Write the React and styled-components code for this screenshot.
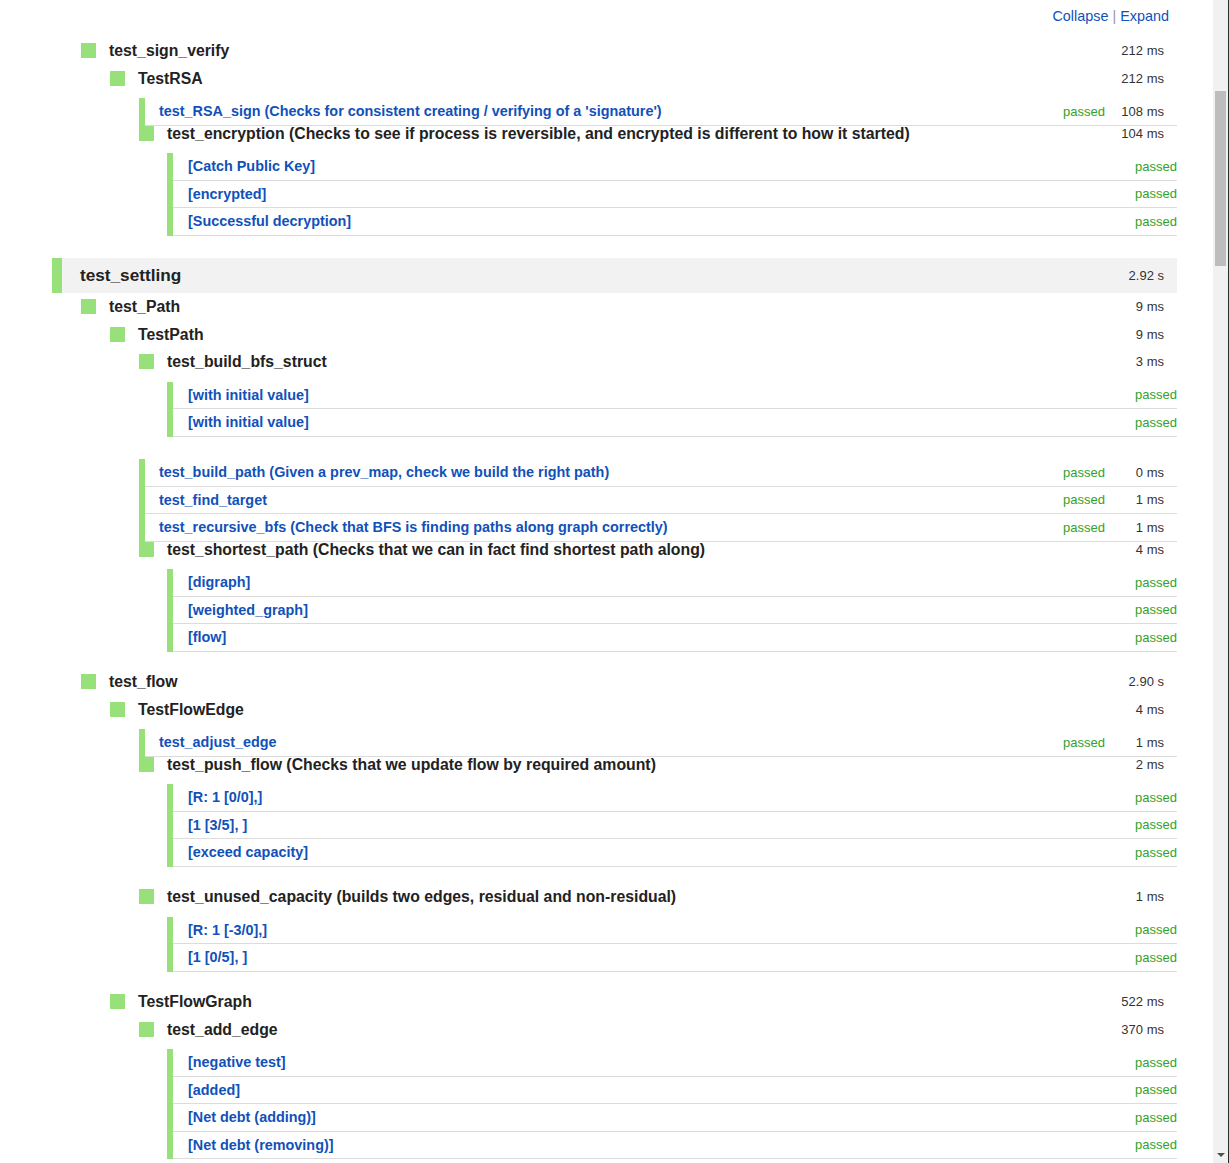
import styled, { createGlobalStyle } from 'styled-components'

const GREEN = '#98e07a'
const LINK = '#1151b9'

const Global = createGlobalStyle`
    html, body {
        margin: 0;
        padding: 0;
        overflow: hidden;
        background: #fff;
    }
    body {
        font-family: "Liberation Sans", Arial, sans-serif;
        color: #222;
    }
`

//#     --- Page frame
const Page = styled.div`
    display: flex;
    height: 1163px;
    overflow: hidden;
`
const Main = styled.main`
    flex: 1;
    min-width: 0;
    padding: 8px 36px 0 52px;
`
const Scrollbar = styled.div`
    width: 15px;
    background-color: #f1f1f1;
    border-right: 1px solid #2b2b2b;
    display: flex;
    flex-direction: column;
    align-items: flex-start;
`
const Thumb = styled.div`
    margin: 91px 0 0 2px;
    width: 11px;
    height: 175px;
    background-color: #bdbdbd;
`
const DownArrow = styled.div`
    margin: auto 0 6px 4px;
    width: 0;
    height: 0;
    border-left: 4px solid transparent;
    border-right: 4px solid transparent;
    border-top: 4px solid #505050;
`

//#     --- Toolbar
const Toolbar = styled.div`
    display: flex;
    justify-content: flex-end;
    align-items: center;
    height: 16px;
    padding-right: 8px;
    margin-bottom: 19px;
    font-size: 14.4px;
    line-height: 16px;
`
const ToolLink = styled.a`
    color: ${ LINK };
    text-decoration: none;
    cursor: pointer;
`
const Sep = styled.span`
    color: #999;
    margin: 0 4px;
`

//#     --- Tree
const Nest = styled.div`
    margin-left: ${ ({ $indent }) => $indent }px;
`
const ModuleHeader = styled.div`
    display: flex;
    align-items: center;
    height: 35px;
    background-color: #f2f2f2;
    border-left: 10px solid ${ GREEN };
    padding: 0 13px 0 18px;
    margin-bottom: 6px;
`
const ModuleTitle = styled.span`
    flex: 1;
    font-size: 17.2px;
    font-weight: bold;
    color: #222;
`
const Heading = styled.div`
    display: flex;
    align-items: center;
    height: 15px;
    margin-bottom: 12.5px;
    padding-right: 13px;
`
const Square = styled.span`
    flex-shrink: 0;
    width: 15px;
    height: 15px;
    margin-right: 13px;
    background-color: ${ GREEN };
`
const Title = styled.span`
    flex: 1;
    font-size: 15.8px;
    font-weight: bold;
    color: #222;
    white-space: nowrap;
    line-height: 15px;
`
const Time = styled.span`
    font-size: 13px;
    color: #333;
    white-space: nowrap;
`
const RowList = styled.div`
    border-left: 6px solid ${ GREEN };
    margin-left: ${ ({ $indent }) => $indent || 0 }px;
    margin-bottom: ${ ({ $gap }) => $gap || 0 }px;
`
const Row = styled.div`
    display: flex;
    align-items: center;
    height: 26.5px;
    border-bottom: 1px solid #dcdcdc;
    padding-left: ${ ({ $param }) => $param ? 15 : 14 }px;
`
const Name = styled.a`
    flex: 1;
    font-size: 14.4px;
    font-weight: bold;
    color: ${ LINK };
    text-decoration: none;
    white-space: nowrap;
`
const Status = styled.span`
    font-size: 13px;
    color: #33a22a;
`
const RowTime = styled(Time)`
    width: 59px;
    padding-right: 13px;
    text-align: right;
`

const before = [
    { type: 'group', name: 'test_sign_verify', time: '212 ms', children: [
        { type: 'group', name: 'TestRSA', time: '212 ms', children: [
            { type: 'tests', items: [
                { name: "test_RSA_sign (Checks for consistent creating / verifying of a 'signature')", time: '108 ms' },
            ] },
            { type: 'sub', name: 'test_encryption (Checks to see if process is reversible, and encrypted is different to how it started)', time: '104 ms',
                params: ['[Catch Public Key]', '[encrypted]', '[Successful decryption]'] },
        ] },
    ] },
]

const settling = [
    { type: 'group', name: 'test_Path', time: '9 ms', children: [
        { type: 'group', name: 'TestPath', time: '9 ms', children: [
            { type: 'sub', name: 'test_build_bfs_struct', time: '3 ms',
                params: ['[with initial value]', '[with initial value]'] },
            { type: 'tests', items: [
                { name: 'test_build_path (Given a prev_map, check we build the right path)', time: '0 ms' },
                { name: 'test_find_target', time: '1 ms' },
                { name: 'test_recursive_bfs (Check that BFS is finding paths along graph correctly)', time: '1 ms' },
            ] },
            { type: 'sub', name: 'test_shortest_path (Checks that we can in fact find shortest path along)', time: '4 ms',
                params: ['[digraph]', '[weighted_graph]', '[flow]'] },
        ] },
    ] },
    { type: 'group', name: 'test_flow', time: '2.90 s', children: [
        { type: 'group', name: 'TestFlowEdge', time: '4 ms', children: [
            { type: 'tests', items: [
                { name: 'test_adjust_edge', time: '1 ms' },
            ] },
            { type: 'sub', name: 'test_push_flow (Checks that we update flow by required amount)', time: '2 ms',
                params: ['[R: 1 [0/0],]', '[1 [3/5], ]', '[exceed capacity]'] },
            { type: 'sub', name: 'test_unused_capacity (builds two edges, residual and non-residual)', time: '1 ms',
                params: ['[R: 1 [-3/0],]', '[1 [0/5], ]'] },
        ] },
        { type: 'group', name: 'TestFlowGraph', time: '522 ms', children: [
            { type: 'sub', name: 'test_add_edge', time: '370 ms',
                params: ['[negative test]', '[added]', '[Net debt (adding)]', '[Net debt (removing)]'] },
        ] },
    ] },
]

const Node = ({ node }) => {
    if (node.type === 'tests') {
        return (
            <RowList>
                { node.items.map((t, i) => (
                    <Row key={ i }>
                        <Name>{ t.name }</Name>
                        <Status>passed</Status>
                        <RowTime>{ t.time }</RowTime>
                    </Row>
                )) }
            </RowList>
        )
    }
    if (node.type === 'sub') {
        return (
            <div>
                <Heading>
                    <Square />
                    <Title>{ node.name }</Title>
                    <Time>{ node.time }</Time>
                </Heading>
                <RowList $indent={ 28 } $gap={ 22.5 }>
                    { node.params.map((p, i) => (
                        <Row $param key={ i }>
                            <Name>{ p }</Name>
                            <Status>passed</Status>
                        </Row>
                    )) }
                </RowList>
            </div>
        )
    }
    return (
        <div>
            <Heading>
                <Square />
                <Title>{ node.name }</Title>
                <Time>{ node.time }</Time>
            </Heading>
            <Nest $indent={ 29 }>
                { node.children.map((c, i) => <Node key={ i } node={ c } />) }
            </Nest>
        </div>
    )
}

const App = () => {
    return (
        <Page>
            <Global />
            <Main>
                <Toolbar>
                    <ToolLink>Collapse</ToolLink>
                    <Sep>|</Sep>
                    <ToolLink>Expand</ToolLink>
                </Toolbar>

                <Nest $indent={ 29 }>
                    { before.map((n, i) => <Node key={ i } node={ n } />) }
                </Nest>

                <ModuleHeader>
                    <ModuleTitle>test_settling</ModuleTitle>
                    <Time>2.92 s</Time>
                </ModuleHeader>
                <Nest $indent={ 29 }>
                    { settling.map((n, i) => <Node key={ i } node={ n } />) }
                </Nest>
            </Main>
            <Scrollbar>
                <Thumb />
                <DownArrow />
            </Scrollbar>
        </Page>
    )
}
export default App
